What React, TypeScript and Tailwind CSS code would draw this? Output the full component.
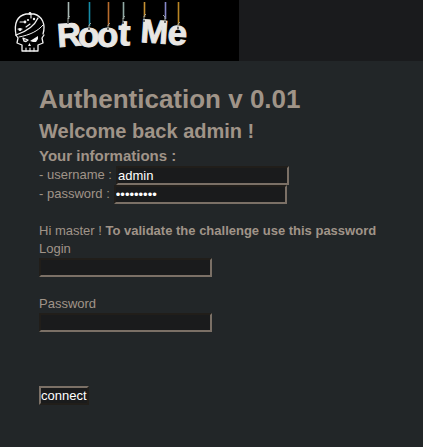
import type { InputHTMLAttributes } from "react";

const letters = [
  { ch: "R", x: 58, y: 47, size: 33, turn: -4, string: 68, top: 19, hole: 23, color: "#a8b8b4" },
  { ch: "o", x: 78, y: 47, size: 35, turn: 0, string: 89, top: 26, hole: 29, color: "#168ca8" },
  { ch: "o", x: 97, y: 47, size: 35, turn: 0, string: 108, top: 26, hole: 29, color: "#b86c2c" },
  { ch: "t", x: 118, y: 45, size: 36, turn: 2, string: 123, top: 19, hole: 23, color: "#91aaa5" },
  { ch: "M", x: 140, y: 42, size: 33, turn: 4, string: 144, top: 17, hole: 21, color: "#c69132" },
  { ch: "e", x: 167, y: 44, size: 35, turn: 4, string: 178, top: 25, hole: 28, color: "#b98524" },
];

function Logo() {
  return (
    <svg className="block h-[61px] w-[239px] bg-black" viewBox="0 0 239 61" role="img" aria-label="Root Me">
      <g fill="none" stroke="#f2f2f2" strokeWidth="1.3" strokeLinejoin="round" strokeLinecap="round">
        <path d="M16 35C14 24 17 16 26 14H34C42 16 46 24 43 34" />
        <path d="M16 35L18 38L17 43L22 45V51H38V45L43 43L42 38L44 35" />
        <path d="M16 35C25 32 34 27 38 18" />
        <path d="M19 37C30 35 38 31 43 25" strokeWidth="1" />
        <path d="M31 14V18M20 22L24 22M18 29H22M26 27L30 24M26 48V51M30 48V51M34 48V51" strokeWidth="1.1" />
        <path d="M23 38L28 40L26 41.500L24 41Z" />
      </g>
      <g fill="#f2f2f2">
        <circle cx="25" cy="22" r="1.4" />
        <circle cx="20" cy="29.500" r="1.5" />
        <circle cx="28" cy="20" r="1.1" />
        <circle cx="34" cy="19" r="1.2" />
        <circle cx="30" cy="13.500" r="1.4" />
        <path d="M30 41L38 36L38 39L36 42H33ZM29.500 43L31 46H28Z" />
      </g>
      {letters.map((l, i) => (
        <g key={i}>
          <path d={`M${l.string + 0.5} 2V${l.top}`} stroke={l.color} strokeWidth="1.6" />
          <text
            x={l.x}
            y={l.y}
            fontSize={l.size}
            transform={`rotate(${l.turn} ${l.x} ${l.y})`}
            className="fill-[#e9e7e4] stroke-[#e9e7e4] font-bold"
          >
            {l.ch}
          </text>
          <path
            d={`M${l.string} ${l.hole}V${l.top - 1}l2 -2`}
            fill="none"
            stroke="#9aa09a"
          />
          <circle cx={l.string} cy={l.hole} r="1" fill="#444" />
        </g>
      ))}
      <path d="M165.500 2V19" stroke="#8587c8" strokeWidth="1.6" />
      <path d="M165 21V17l-2 -2" fill="none" stroke="#9aa09a" />
      <circle cx="165" cy="22" r="1" fill="#444" />
    </svg>
  );
}

function Field(props: InputHTMLAttributes<HTMLInputElement>) {
  return (
    <input
      {...props}
      className="block h-[19px] w-[173px] border-2 border-t-[#211e1a] border-r-[#7b7066] border-b-[#7b7066] border-l-[#211e1a] bg-[#1a1b1c] p-0 text-[13px] text-white outline-none"
    />
  );
}

export default function App() {
  return (
    <div className="min-h-screen bg-[#222628] font-['Liberation_Sans',Arial,sans-serif] text-[13px] leading-[18px] text-[#a09488]">
      <header className="bg-[#1a1b1d]">
        <Logo />
      </header>
      <main className="px-[39px] pt-6 pb-10">
        <h1 className="text-[26px] leading-7 font-bold">Authentication v 0.01</h1>
        <h2 className="mt-1 text-[20px] leading-7 font-bold">Welcome back admin !</h2>
        <h3 className="mt-px text-[15px] leading-5 font-bold">Your informations :</h3>
        <div className="flex gap-1">
          <label htmlFor="user">- username :</label>
          <Field id="user" type="text" defaultValue="admin" />
        </div>
        <div className="flex gap-1">
          <label htmlFor="pass">- password :</label>
          <Field id="pass" type="password" defaultValue="challenge" />
        </div>
        <p className="mt-[18px]">
          Hi master ! <b>To validate the challenge use this password</b>
        </p>
        <form onSubmit={(e) => e.preventDefault()}>
          <label htmlFor="login" className="block">Login</label>
          <Field id="login" type="text" />
          <label htmlFor="password" className="mt-[18px] block">Password</label>
          <Field id="password" type="password" />
          <button
            type="submit"
            className="mt-[54px] block h-[19px] border-2 border-t-[#7b7066] border-r-[#211e1a] border-b-[#211e1a] border-l-[#7b7066] bg-[#1a1b1c] p-0 text-[13px] leading-[15px] text-white"
          >
            connect
          </button>
        </form>
      </main>
    </div>
  );
}
